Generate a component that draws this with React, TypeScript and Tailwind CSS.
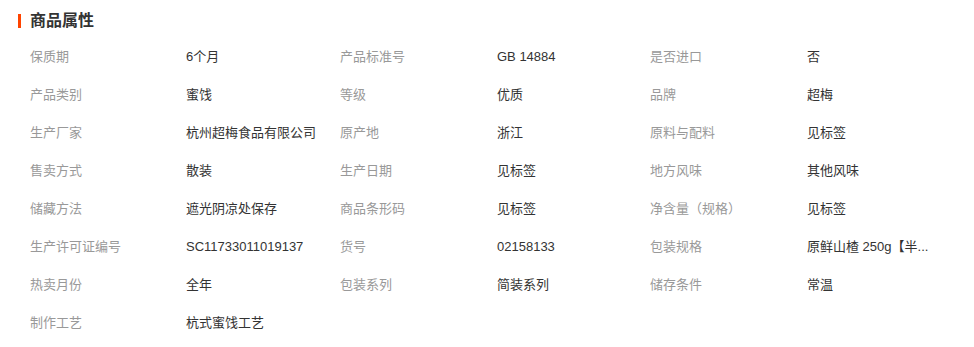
const rows: [string, string][][] = [
  [["保质期", "6个月"], ["产品标准号", "GB 14884"], ["是否进口", "否"]],
  [["产品类别", "蜜饯"], ["等级", "优质"], ["品牌", "超梅"]],
  [["生产厂家", "杭州超梅食品有限公司"], ["原产地", "浙江"], ["原料与配料", "见标签"]],
  [["售卖方式", "散装"], ["生产日期", "见标签"], ["地方风味", "其他风味"]],
  [["储藏方法", "遮光阴凉处保存"], ["商品条形码", "见标签"], ["净含量（规格）", "见标签"]],
  [["生产许可证编号", "SC11733011019137"], ["货号", "02158133"], ["包装规格", "原鲜山楂 250g【半..."]],
  [["热卖月份", "全年"], ["包装系列", "简装系列"], ["储存条件", "常温"]],
  [["制作工艺", "杭式蜜饯工艺"]],
];

export default function App() {
  return (
    <div
      className="w-[974px] h-[347px] bg-white overflow-hidden"
      style={{ fontFamily: '"Liberation Sans", "Noto Sans CJK SC", sans-serif' }}
    >
      <div className="flex items-center h-[38px] pt-[3px] pl-[18px]">
        <span className="w-[3px] h-[14px] bg-[#ff4400]" />
        <h2 className="ml-[9px] text-[16px] leading-[18px] font-bold text-[#333]">商品属性</h2>
      </div>
      <div className="pl-[30px]">
        {rows.map((row, i) => (
          <div key={i} className="grid grid-cols-[156px_154px_157px_153px_157px_140px] h-[38px] items-center text-[13px] leading-[16px]">
            {row.map(([k, v], j) => (
              <div key={j} className="contents">
                <span className="text-[#999] whitespace-nowrap">{k}</span>
                <span className="text-[#333] whitespace-nowrap">{v}</span>
              </div>
            ))}
          </div>
        ))}
      </div>
    </div>
  );
}
